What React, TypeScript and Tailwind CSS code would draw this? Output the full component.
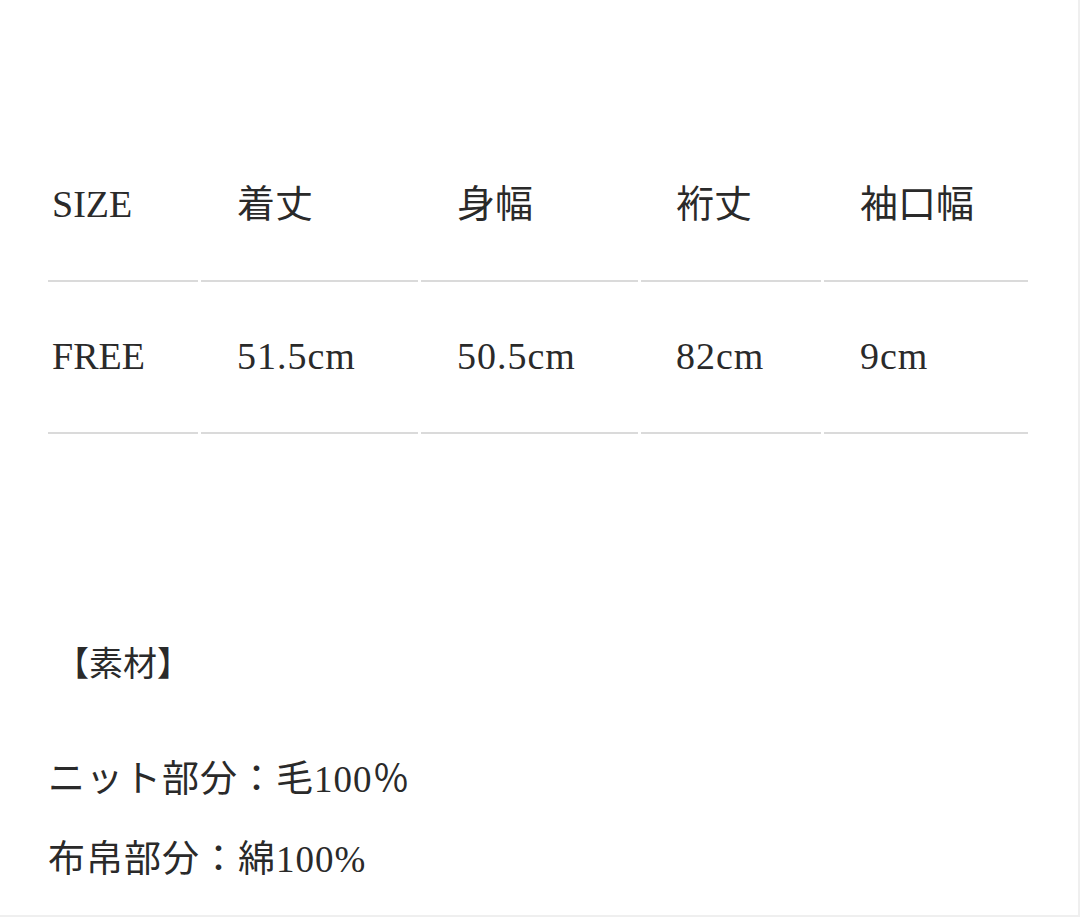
import * as React from 'react';

const font = { fontFamily: '"Liberation Serif", "Noto Sans CJK JP", serif' };

const cols = [
  { w: 'w-[150px]', pad: 'pl-[4px]' },
  { w: 'w-[217px]', pad: 'pl-[36px]' },
  { w: 'w-[217px]', pad: 'pl-[36px]' },
  { w: 'w-[180px]', pad: 'pl-[35px]' },
  { w: 'w-[204px]', pad: 'pl-[36px]' },
];

const rows = [
  { cells: ['SIZE', '着丈', '身幅', '裄丈', '袖口幅'], tracking: '' },
  { cells: ['FREE', '51.5cm', '50.5cm', '82cm', '9cm'], tracking: 'tracking-[1px]' },
];

const SizeRow = ({ cells, tracking }: { cells: string[]; tracking: string }) => {
  return (
    <div className="flex flex-row gap-x-[3px]">
      {cells.map((text, i) => (
        <div
          key={i}
          className={`${cols[i].w} ${cols[i].pad} flex h-[152px] items-center border-b-2 border-[#dadada] pb-[2px]`}
        >
          <span className={`text-[38px] leading-none ${i > 0 ? tracking : ''}`}>{text}</span>
        </div>
      ))}
    </div>
  );
};

export default function App() {
  return (
    <div
      style={font}
      className="h-[917px] w-[1080px] overflow-hidden border-r-2 border-b-2 border-[#efefef] bg-white text-[#2a2a2a]"
    >
      <div className="pl-[48px] pt-[130px]">
        {rows.map((r, i) => (
          <SizeRow key={i} cells={r.cells} tracking={r.tracking} />
        ))}
      </div>

      <div className="pl-[48px]">
        <p className="mt-[211px] pl-[7px] text-[34px] leading-[40px]">【素材】</p>
        <p className="mt-[75px] text-[37px] leading-[40px] tracking-[1px]">ニット部分：毛100％</p>
        <p className="mt-[40px] text-[37px] leading-[40px] tracking-[1px]">布帛部分：綿100%</p>
      </div>
    </div>
  );
}
